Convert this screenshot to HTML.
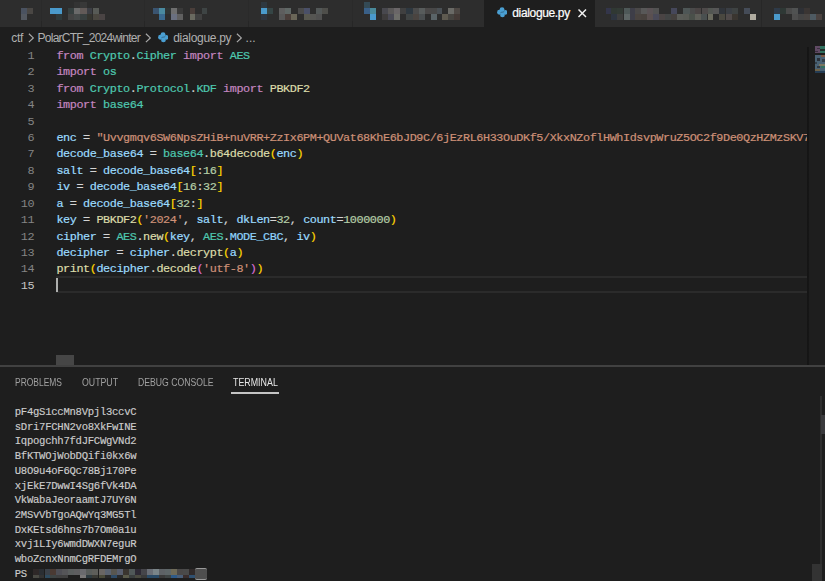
<!DOCTYPE html>
<html><head><meta charset="utf-8">
<style>
html,body{margin:0;padding:0;width:825px;height:581px;overflow:hidden;background:#1e1e1e;}
body{position:relative;font-family:"Liberation Sans",sans-serif;}
.abs{position:absolute;}
i{position:absolute;display:block;}
#tabs{position:absolute;left:0;top:0;width:825px;height:27.4px;background:#2d2d2d;}
.sep{position:absolute;top:0;width:1px;height:27px;background:#272727;}
#active{position:absolute;left:484px;top:0;width:110.5px;height:27.4px;background:#1e1e1e;}
.tabtxt{position:absolute;font-size:12px;color:#ffffff;white-space:nowrap;-webkit-text-stroke:0.2px #ffffff;}
#crumb{position:absolute;left:0;top:27px;width:825px;height:19px;font-size:12px;color:#b0b0b0;white-space:nowrap;}
#crumb span{position:absolute;top:3.5px;}
.ln{position:absolute;left:0;width:34.2px;text-align:right;color:#858585;font-family:"Liberation Mono",monospace;font-size:11.8px;letter-spacing:-0.413px;line-height:16.43px;height:16.43px;}
.cl{position:absolute;left:56.4px;font-family:"Liberation Mono",monospace;font-size:11.8px;letter-spacing:-0.413px;line-height:16.43px;height:16.43px;white-space:pre;color:#d4d4d4;-webkit-text-stroke:0.2px currentColor;}
.k{color:#c586c0}.t{color:#4ec9b0}.v{color:#9cdcfe}.f{color:#dcdcaa}.s{color:#ce9178}.n{color:#b5cea8}.b1{color:#ffd700}.b2{color:#da70d6}.c{color:#8fd4fc}
#panelborder{position:absolute;left:0;top:365px;width:825px;height:1.5px;background:#414141;}
.ptab{position:absolute;top:377px;font-size:10.2px;color:#a0a0a0;white-space:nowrap;transform-origin:0 0;}
.tl{position:absolute;left:14.8px;font-family:"Liberation Mono",monospace;font-size:10.6px;letter-spacing:-0.28px;line-height:14.7px;height:14.7px;white-space:pre;color:#cccccc;-webkit-text-stroke:0.15px currentColor;}
</style></head><body>
<div id="tabs">
  <div class="sep" style="left:41px;top:20.5px;height:6.9px;background:#262626"></div><div class="sep" style="left:41px;height:20.5px;background:#2a2a2a"></div>
  <div class="sep" style="left:143.5px;top:20.5px;height:6.9px;background:#262626"></div><div class="sep" style="left:143.5px;height:20.5px;background:#2a2a2a"></div>
  <div class="sep" style="left:247.7px;top:20.5px;height:6.9px;background:#262626"></div><div class="sep" style="left:247.7px;height:20.5px;background:#2a2a2a"></div>
  <div class="sep" style="left:351.7px;top:20.5px;height:6.9px;background:#262626"></div><div class="sep" style="left:351.7px;height:20.5px;background:#2a2a2a"></div>
  <div class="sep" style="left:761.3px"></div>
<div style="position:absolute;left:0;top:0;width:825px;height:27px;filter:blur(0.45px)">
<i style="left:20.9px;top:7.8px;width:6.1px;height:6.0px;background:#4A5260"></i>
<i style="left:27.0px;top:7.8px;width:6.0px;height:6.0px;background:#4A4744"></i>
<i style="left:20.9px;top:13.8px;width:6.1px;height:6.1px;background:#535860"></i>
<i style="left:50.0px;top:7.8px;width:6.0px;height:6.0px;background:#4A9ACC"></i>
<i style="left:56.0px;top:7.8px;width:6.0px;height:6.0px;background:#4A9ACC"></i>
<i style="left:56.0px;top:13.8px;width:6.0px;height:6.1px;background:#2E3A3C"></i>
<i style="left:68.2px;top:7.8px;width:6.2px;height:6.0px;background:#364040"></i>
<i style="left:74.4px;top:7.8px;width:6.0px;height:6.0px;background:#6A6A6A"></i>
<i style="left:80.4px;top:7.8px;width:6.3px;height:6.0px;background:#625A58"></i>
<i style="left:86.7px;top:7.8px;width:5.8px;height:6.0px;background:#3C3E44"></i>
<i style="left:92.5px;top:7.8px;width:6.3px;height:6.0px;background:#575A56"></i>
<i style="left:68.2px;top:13.8px;width:6.2px;height:6.1px;background:#444444"></i>
<i style="left:74.4px;top:13.8px;width:6.0px;height:6.1px;background:#464A4A"></i>
<i style="left:80.4px;top:13.8px;width:6.3px;height:6.1px;background:#394040"></i>
<i style="left:86.7px;top:13.8px;width:5.8px;height:6.1px;background:#35352F"></i>
<i style="left:92.5px;top:13.8px;width:6.3px;height:6.1px;background:#4A4740"></i>
<i style="left:98.8px;top:13.8px;width:5.8px;height:6.1px;background:#4A4444"></i>
<i style="left:74.4px;top:1.7px;width:6.0px;height:6.1px;background:#333333"></i>
<i style="left:80.4px;top:1.7px;width:6.3px;height:6.1px;background:#383838"></i>
<i style="left:153.1px;top:7.8px;width:6.0px;height:6.0px;background:#3A5470"></i>
<i style="left:159.1px;top:7.8px;width:6.1px;height:6.0px;background:#4A8AA0"></i>
<i style="left:165.2px;top:7.8px;width:5.8px;height:6.0px;background:#2F3535"></i>
<i style="left:171.0px;top:7.8px;width:6.3px;height:6.0px;background:#6E6E6E"></i>
<i style="left:177.3px;top:7.8px;width:5.9px;height:6.0px;background:#3A3A3A"></i>
<i style="left:189.5px;top:7.8px;width:5.8px;height:6.0px;background:#4A3E3A"></i>
<i style="left:201.6px;top:7.8px;width:5.8px;height:6.0px;background:#3E4444"></i>
<i style="left:159.1px;top:13.8px;width:6.1px;height:6.1px;background:#3A6A90"></i>
<i style="left:171.0px;top:13.8px;width:6.3px;height:6.1px;background:#6A7080"></i>
<i style="left:177.3px;top:13.8px;width:5.9px;height:6.1px;background:#606060"></i>
<i style="left:189.5px;top:13.8px;width:5.8px;height:6.1px;background:#6A6A60"></i>
<i style="left:195.3px;top:13.8px;width:6.3px;height:6.1px;background:#404040"></i>
<i style="left:261.0px;top:1.7px;width:6.2px;height:6.1px;background:#2E3840"></i>
<i style="left:261.0px;top:7.8px;width:6.2px;height:6.0px;background:#4A9ACC"></i>
<i style="left:267.2px;top:7.8px;width:5.8px;height:6.0px;background:#354545"></i>
<i style="left:261.0px;top:13.8px;width:6.2px;height:6.1px;background:#2E3540"></i>
<i style="left:279.0px;top:7.8px;width:6.3px;height:6.0px;background:#5E5E5E"></i>
<i style="left:285.3px;top:7.8px;width:6.1px;height:6.0px;background:#606866"></i>
<i style="left:297.5px;top:7.8px;width:6.1px;height:6.0px;background:#4A4A4A"></i>
<i style="left:303.6px;top:7.8px;width:6.0px;height:6.0px;background:#4A5068"></i>
<i style="left:315.9px;top:7.8px;width:6.0px;height:6.0px;background:#535858"></i>
<i style="left:321.9px;top:7.8px;width:6.1px;height:6.0px;background:#4E4E4A"></i>
<i style="left:279.0px;top:13.8px;width:6.3px;height:6.1px;background:#585858"></i>
<i style="left:285.3px;top:13.8px;width:6.1px;height:6.1px;background:#4A3E3A"></i>
<i style="left:291.4px;top:13.8px;width:6.1px;height:6.1px;background:#6A6658"></i>
<i style="left:303.6px;top:13.8px;width:6.0px;height:6.1px;background:#585850"></i>
<i style="left:309.6px;top:13.8px;width:6.3px;height:6.1px;background:#555552"></i>
<i style="left:315.9px;top:13.8px;width:6.0px;height:6.1px;background:#505050"></i>
<i style="left:364.1px;top:1.7px;width:6.1px;height:6.1px;background:#344A55"></i>
<i style="left:364.1px;top:7.8px;width:6.1px;height:6.0px;background:#3A6088"></i>
<i style="left:370.2px;top:7.8px;width:6.0px;height:6.0px;background:#4A8A9A"></i>
<i style="left:370.2px;top:13.8px;width:6.0px;height:6.1px;background:#4A9ACC"></i>
<i style="left:382.0px;top:7.8px;width:6.1px;height:6.0px;background:#48484E"></i>
<i style="left:388.1px;top:7.8px;width:6.0px;height:6.0px;background:#5A5858"></i>
<i style="left:394.1px;top:7.8px;width:6.1px;height:6.0px;background:#6A6668"></i>
<i style="left:400.2px;top:7.8px;width:6.1px;height:6.0px;background:#404040"></i>
<i style="left:406.3px;top:7.8px;width:6.3px;height:6.0px;background:#2E3840"></i>
<i style="left:412.6px;top:7.8px;width:6.1px;height:6.0px;background:#4A4A4A"></i>
<i style="left:418.7px;top:7.8px;width:6.1px;height:6.0px;background:#585C5C"></i>
<i style="left:424.8px;top:7.8px;width:6.1px;height:6.0px;background:#4A4848"></i>
<i style="left:430.9px;top:7.8px;width:6.1px;height:6.0px;background:#484848"></i>
<i style="left:437.0px;top:7.8px;width:5.1px;height:6.0px;background:#4A5055"></i>
<i style="left:448.1px;top:7.8px;width:6.0px;height:6.0px;background:#6A6A66"></i>
<i style="left:454.1px;top:7.8px;width:6.2px;height:6.0px;background:#4E4844"></i>
<i style="left:382.0px;top:13.8px;width:6.1px;height:6.1px;background:#3E3C3C"></i>
<i style="left:388.1px;top:13.8px;width:6.0px;height:6.1px;background:#4A4A55"></i>
<i style="left:394.1px;top:13.8px;width:6.1px;height:6.1px;background:#6E6E6A"></i>
<i style="left:406.3px;top:13.8px;width:6.3px;height:6.1px;background:#404444"></i>
<i style="left:412.6px;top:13.8px;width:6.1px;height:6.1px;background:#4A4440"></i>
<i style="left:418.7px;top:13.8px;width:6.1px;height:6.1px;background:#4A4E50"></i>
<i style="left:430.9px;top:13.8px;width:6.1px;height:6.1px;background:#5A6468"></i>
<i style="left:442.1px;top:13.8px;width:6.0px;height:6.1px;background:#5E5A50"></i>
<i style="left:448.1px;top:13.8px;width:6.0px;height:6.1px;background:#464440"></i>
<i style="left:454.1px;top:13.8px;width:6.2px;height:6.1px;background:#443A36"></i>
<i style="left:605.5px;top:7.8px;width:5.8px;height:6.0px;background:#33354A"></i>
<i style="left:611.3px;top:7.8px;width:5.9px;height:6.0px;background:#303833"></i>
<i style="left:617.2px;top:7.8px;width:6.3px;height:6.0px;background:#323A35"></i>
<i style="left:623.5px;top:7.8px;width:6.3px;height:6.0px;background:#4E5858"></i>
<i style="left:629.8px;top:7.8px;width:4.8px;height:6.0px;background:#3E3E48"></i>
<i style="left:634.6px;top:7.8px;width:6.4px;height:6.0px;background:#4A4848"></i>
<i style="left:641.0px;top:7.8px;width:6.2px;height:6.0px;background:#585858"></i>
<i style="left:647.2px;top:7.8px;width:5.8px;height:6.0px;background:#5A5255"></i>
<i style="left:653.0px;top:7.8px;width:6.0px;height:6.0px;background:#525252"></i>
<i style="left:611.3px;top:13.8px;width:5.9px;height:6.1px;background:#2E3540"></i>
<i style="left:617.2px;top:13.8px;width:6.3px;height:6.1px;background:#3E3E3E"></i>
<i style="left:623.5px;top:13.8px;width:6.3px;height:6.1px;background:#5E6666"></i>
<i style="left:629.8px;top:13.8px;width:4.8px;height:6.1px;background:#3E3E48"></i>
<i style="left:634.6px;top:13.8px;width:6.4px;height:6.1px;background:#4A4440"></i>
<i style="left:641.0px;top:13.8px;width:6.2px;height:6.1px;background:#48423E"></i>
<i style="left:647.2px;top:13.8px;width:5.8px;height:6.1px;background:#5A5050"></i>
<i style="left:653.0px;top:13.8px;width:6.0px;height:6.1px;background:#4A4A58"></i>
<i style="left:659.0px;top:13.8px;width:6.0px;height:6.1px;background:#4A4444"></i>
<i style="left:665.0px;top:13.8px;width:5.9px;height:6.1px;background:#424444"></i>
<i style="left:671.2px;top:7.8px;width:6.1px;height:6.0px;background:#45475A"></i>
<i style="left:683.3px;top:7.8px;width:6.3px;height:6.0px;background:#4E5656"></i>
<i style="left:689.6px;top:7.8px;width:5.8px;height:6.0px;background:#4A4A4A"></i>
<i style="left:695.4px;top:7.8px;width:6.1px;height:6.0px;background:#4A4444"></i>
<i style="left:701.5px;top:7.8px;width:6.0px;height:6.0px;background:#4E4A4A"></i>
<i style="left:707.5px;top:7.8px;width:5.8px;height:6.0px;background:#525652"></i>
<i style="left:713.3px;top:7.8px;width:6.1px;height:6.0px;background:#565656"></i>
<i style="left:719.4px;top:7.8px;width:6.1px;height:6.0px;background:#30343A"></i>
<i style="left:725.5px;top:7.8px;width:6.3px;height:6.0px;background:#3A3E44"></i>
<i style="left:731.8px;top:7.8px;width:5.8px;height:6.0px;background:#3E4242"></i>
<i style="left:670.9px;top:13.8px;width:6.1px;height:6.1px;background:#44403E"></i>
<i style="left:677.0px;top:13.8px;width:6.3px;height:6.1px;background:#5A5C58"></i>
<i style="left:683.3px;top:13.8px;width:5.8px;height:6.1px;background:#585A55"></i>
<i style="left:689.1px;top:13.8px;width:6.0px;height:6.1px;background:#4A504A"></i>
<i style="left:695.1px;top:13.8px;width:6.1px;height:6.1px;background:#5E5E58"></i>
<i style="left:701.2px;top:13.8px;width:6.3px;height:6.1px;background:#4A5050"></i>
<i style="left:707.5px;top:13.8px;width:5.8px;height:6.1px;background:#6A6A5E"></i>
<i style="left:713.3px;top:13.8px;width:6.1px;height:6.1px;background:#2A2A2A"></i>
<i style="left:719.4px;top:13.8px;width:6.1px;height:6.1px;background:#4A4840"></i>
<i style="left:725.5px;top:13.8px;width:6.3px;height:6.1px;background:#504A4A"></i>
<i style="left:731.8px;top:13.8px;width:5.8px;height:6.1px;background:#3A3530"></i>
<i style="left:743.7px;top:7.8px;width:6.0px;height:6.0px;background:#454C58"></i>
<i style="left:749.7px;top:13.8px;width:6.0px;height:6.1px;background:#B0ACA0"></i>
<i style="left:773.7px;top:7.8px;width:6.0px;height:6.0px;background:#2E3A48"></i>
<i style="left:779.7px;top:7.8px;width:6.0px;height:6.0px;background:#2E3835"></i>
<i style="left:785.7px;top:7.8px;width:6.0px;height:6.0px;background:#4A4A4A"></i>
<i style="left:791.7px;top:7.8px;width:6.6px;height:6.0px;background:#505252"></i>
<i style="left:798.3px;top:7.8px;width:6.0px;height:6.0px;background:#2E3035"></i>
<i style="left:804.3px;top:7.8px;width:6.0px;height:6.0px;background:#3A3533"></i>
<i style="left:773.7px;top:13.8px;width:6.0px;height:6.1px;background:#4A9ACC"></i>
<i style="left:791.7px;top:13.8px;width:6.6px;height:6.1px;background:#4E4E4E"></i>
<i style="left:798.3px;top:13.8px;width:6.0px;height:6.1px;background:#444444"></i>
<i style="left:804.3px;top:13.8px;width:6.0px;height:6.1px;background:#484442"></i>
<i style="left:810.3px;top:13.8px;width:6.0px;height:6.1px;background:#4E5A62"></i>
<i style="left:816.3px;top:13.8px;width:6.0px;height:6.1px;background:#4A4240"></i>
</div>
</div>
<div id="active">
  <svg class="abs" style="left:12.5px;top:7px;filter:blur(0.25px)" width="10.5" height="10.5" viewBox="0 0 10 10">
    <g fill="#4a9fd2"><ellipse cx="4.8" cy="2.4" rx="2.3" ry="2.1"/><ellipse cx="2.2" cy="5" rx="2.1" ry="2.3"/><ellipse cx="7.8" cy="5.1" rx="2.1" ry="2.3"/><ellipse cx="5.2" cy="7.6" rx="2.3" ry="2.1"/><circle cx="5" cy="5" r="2"/></g><path d="M3.3 5.5C4.5 4.6 5.6 5.2 6.9 4.3" stroke="#264660" stroke-width="0.6" fill="none"/>
  </svg>
  <div class="tabtxt" style="left:28.3px;top:5.5px;letter-spacing:-0.35px">dialogue.py</div>
  <svg class="abs" style="left:94px;top:9.3px" width="8.5" height="8.5" viewBox="0 0 8.5 8.5"><path d="M0.5 0.5L8 8M8 0.5L0.5 8" stroke="#f0f0f0" stroke-width="1.45"/></svg>
</div>
<div id="crumb">
  <span style="left:11.3px;letter-spacing:-0.3px">ctf</span>
  <svg class="abs" style="left:28px;top:5.5px" width="7" height="10" viewBox="0 0 7 10"><path d="M0.9 0.7L5.3 4.9L0.9 9.1" fill="none" stroke="#a9a9a9" stroke-width="1.2"/></svg>
  <span style="left:37.6px;letter-spacing:-0.76px">PolarCTF_2024winter</span>
  <svg class="abs" style="left:145.2px;top:5.5px" width="7" height="10" viewBox="0 0 7 10"><path d="M0.9 0.7L5.3 4.9L0.9 9.1" fill="none" stroke="#a9a9a9" stroke-width="1.2"/></svg>
  <svg class="abs" style="left:157.7px;top:5px;filter:blur(0.25px)" width="10.5" height="10.5" viewBox="0 0 10 10">
    <g fill="#4a9fd2"><ellipse cx="4.8" cy="2.4" rx="2.3" ry="2.1"/><ellipse cx="2.2" cy="5" rx="2.1" ry="2.3"/><ellipse cx="7.8" cy="5.1" rx="2.1" ry="2.3"/><ellipse cx="5.2" cy="7.6" rx="2.3" ry="2.1"/><circle cx="5" cy="5" r="2"/></g><path d="M3.3 5.5C4.5 4.6 5.6 5.2 6.9 4.3" stroke="#264660" stroke-width="0.6" fill="none"/>
  </svg>
  <span style="left:173.2px;letter-spacing:-0.3px">dialogue.py</span>
  <svg class="abs" style="left:235.7px;top:5.5px" width="7" height="10" viewBox="0 0 7 10"><path d="M0.9 0.7L5.3 4.9L0.9 9.1" fill="none" stroke="#a9a9a9" stroke-width="1.2"/></svg>
  <span style="left:245.6px">...</span>
</div>

<div id="editor">
<div class="ln" style="top:47.8px">1</div>
<div class="ln" style="top:64.2px">2</div>
<div class="ln" style="top:80.7px">3</div>
<div class="ln" style="top:97.1px">4</div>
<div class="ln" style="top:113.5px">5</div>
<div class="ln" style="top:129.9px">6</div>
<div class="ln" style="top:146.4px">7</div>
<div class="ln" style="top:162.8px">8</div>
<div class="ln" style="top:179.2px">9</div>
<div class="ln" style="top:195.7px">10</div>
<div class="ln" style="top:212.1px">11</div>
<div class="ln" style="top:228.5px">12</div>
<div class="ln" style="top:244.9px">13</div>
<div class="ln" style="top:261.4px">14</div>
<div class="ln" style="top:277.8px;color:#c6c6c6">15</div>
<!-- current line highlight -->
<i style="left:56px;top:276.4px;width:751px;height:16.6px;box-sizing:border-box;border-top:2px solid #2b2b2b;border-bottom:2px solid #2b2b2b"></i>
<i style="left:56.3px;top:277.8px;width:1.7px;height:14px;background:#aeafad"></i>

<div class="cl" style="top:47.8px"><span class="k">from</span> <span class="t">Crypto</span>.<span class="t">Cipher</span> <span class="k">import</span> <span class="t">AES</span></div>
<div class="cl" style="top:64.2px"><span class="k">import</span> <span class="t">os</span></div>
<div class="cl" style="top:80.7px"><span class="k">from</span> <span class="t">Crypto</span>.<span class="t">Protocol</span>.<span class="t">KDF</span> <span class="k">import</span> <span class="f">PBKDF2</span></div>
<div class="cl" style="top:97.1px"><span class="k">import</span> <span class="t">base64</span></div>
<div class="cl" style="top:129.9px"><span class="v">enc</span> = <span class="s">"Uvvgmqv6SW6NpsZHiB+nuVRR+ZzIx6PM+QUVat68KhE6bJD9C/6jEzRL6H33OuDKf5/XkxNZoflHWhIdsvpWruZ5OC2f9De0QzHZMzSKV7</span></div>
<div class="cl" style="top:146.4px"><span class="v">decode_base64</span> = <span class="t">base64</span>.<span class="f">b64decode</span><span class="b1">(</span><span class="v">enc</span><span class="b1">)</span></div>
<div class="cl" style="top:162.8px"><span class="v">salt</span> = <span class="v">decode_base64</span><span class="b1">[</span>:<span class="n">16</span><span class="b1">]</span></div>
<div class="cl" style="top:179.2px"><span class="v">iv</span> = <span class="v">decode_base64</span><span class="b1">[</span><span class="n">16</span>:<span class="n">32</span><span class="b1">]</span></div>
<div class="cl" style="top:195.7px"><span class="v">a</span> = <span class="v">decode_base64</span><span class="b1">[</span><span class="n">32</span>:<span class="b1">]</span></div>
<div class="cl" style="top:212.1px"><span class="v">key</span> = <span class="f">PBKDF2</span><span class="b1">(</span><span class="s">'2024'</span>, <span class="v">salt</span>, <span class="v">dkLen</span>=<span class="n">32</span>, <span class="v">count</span>=<span class="n">1000000</span><span class="b1">)</span></div>
<div class="cl" style="top:228.5px"><span class="v">cipher</span> = <span class="t">AES</span>.<span class="f">new</span><span class="b1">(</span><span class="v">key</span>, <span class="t">AES</span>.<span class="c">MODE_CBC</span>, <span class="v">iv</span><span class="b1">)</span></div>
<div class="cl" style="top:244.9px"><span class="v">decipher</span> = <span class="v">cipher</span>.<span class="f">decrypt</span><span class="b1">(</span><span class="v">a</span><span class="b1">)</span></div>
<div class="cl" style="top:261.4px"><span class="f">print</span><span class="b1">(</span><span class="v">decipher</span>.<span class="f">decode</span><span class="b2">(</span><span class="s">'utf-8'</span><span class="b2">)</span><span class="b1">)</span></div>
<!-- minimap shadow and cover -->
<i style="left:807px;top:46px;width:18px;height:320px;background:#1e1e1e"></i>
<i style="left:806.5px;top:47px;width:2.5px;height:319px;background:linear-gradient(to right,#181818,#111111 60%,#1e1e1e)"></i>
<div style="position:absolute;left:0;top:0;filter:blur(0.6px)">
<i style="left:815px;top:46.2px;width:5.0px;height:7.3px;background:#604A64"></i>
<i style="left:820px;top:46.2px;width:5.0px;height:7.3px;background:#30705E"></i>
<i style="left:817px;top:47.5px;width:3.0px;height:1.5px;background:#3a3040"></i>
<i style="left:820px;top:48.5px;width:5.0px;height:2.0px;background:#22302c"></i>
<i style="left:815px;top:51px;width:3.0px;height:1.0px;background:#3a3040"></i>
<i style="left:815px;top:55px;width:10.0px;height:16.0px;background:#4A6274"></i>
<i style="left:821px;top:55px;width:4.0px;height:2.0px;background:#7A5A46"></i>
<i style="left:817px;top:58px;width:3.0px;height:3.0px;background:#2a3038"></i>
<i style="left:822px;top:59px;width:3.0px;height:3.0px;background:#34404a"></i>
<i style="left:815px;top:62px;width:2.0px;height:2.0px;background:#34404a"></i>
<i style="left:819px;top:64px;width:6.0px;height:2.0px;background:#7A7660"></i>
<i style="left:821px;top:66px;width:4.0px;height:2.0px;background:#337060"></i>
<i style="left:817px;top:66px;width:3.0px;height:2.0px;background:#303840"></i>
<i style="left:815px;top:69px;width:5.0px;height:2.0px;background:#6E6248"></i>
<i style="left:815px;top:71px;width:10.0px;height:1.7px;background:#243C54"></i>
</div>
<!-- horizontal scrollbar slider -->
<i style="left:56px;top:354.7px;width:17.6px;height:10.5px;background:#464646"></i>
</div>

<div id="panelborder"></div>
<div class="ptab" style="left:14.7px;transform:scaleX(0.83)">PROBLEMS</div>
<div class="ptab" style="left:82px;transform:scaleX(0.86)">OUTPUT</div>
<div class="ptab" style="left:138px;transform:scaleX(0.85)">DEBUG CONSOLE</div>
<div class="ptab" style="left:232.8px;color:#e7e7e7;transform:scaleX(0.87)">TERMINAL</div>
<i style="left:231px;top:392px;width:48px;height:2px;background:#c4c4c4"></i>

<div id="term">
<div class="tl" style="top:405.0px">pF4gS1ccMn8Vpjl3ccvC</div>
<div class="tl" style="top:419.7px">sDri7FCHN2vo8XkFwINE</div>
<div class="tl" style="top:434.4px">Iqpogchh7fdJFCWgVNd2</div>
<div class="tl" style="top:449.1px">BfKTWOjWobDQifi0kx6w</div>
<div class="tl" style="top:463.8px">U8O9u4oF6Qc78Bj170Pe</div>
<div class="tl" style="top:478.5px">xjEkE7DwwI4Sg6fVk4DA</div>
<div class="tl" style="top:493.2px">VkWabaJeoraamtJ7UY6N</div>
<div class="tl" style="top:507.9px">2MSvVbTgoAQwYq3MG5Tl</div>
<div class="tl" style="top:522.6px">DxKEtsd6hns7b7Om0a1u</div>
<div class="tl" style="top:537.3px">xvj1LIy6wmdDWXN7eguR</div>
<div class="tl" style="top:552.0px">wboZcnxNnmCgRFDEMrgO</div>
<div class="tl" style="top:566.7px">PS</div>
<div style="position:absolute;left:0;top:0;width:825px;height:581px;filter:blur(0.35px)">
<i style="left:33.0px;top:568.5px;width:6.1px;height:6.5px;background:#2E2828"></i>
<i style="left:39.1px;top:568.5px;width:5.4px;height:6.5px;background:#2A2E33"></i>
<i style="left:44.5px;top:568.5px;width:5.5px;height:6.5px;background:#3A4048"></i>
<i style="left:50.0px;top:568.5px;width:6.0px;height:6.5px;background:#4A3A33"></i>
<i style="left:56.0px;top:568.5px;width:6.1px;height:6.5px;background:#4E4E55"></i>
<i style="left:62.1px;top:568.5px;width:6.1px;height:6.5px;background:#555558"></i>
<i style="left:68.2px;top:568.5px;width:6.0px;height:6.5px;background:#5A5E5E"></i>
<i style="left:74.2px;top:568.5px;width:6.1px;height:6.5px;background:#5E5E60"></i>
<i style="left:80.3px;top:568.5px;width:6.1px;height:6.5px;background:#6A6A6E"></i>
<i style="left:86.4px;top:568.5px;width:6.0px;height:6.5px;background:#585C5A"></i>
<i style="left:92.4px;top:568.5px;width:6.1px;height:6.5px;background:#5E5E5A"></i>
<i style="left:98.5px;top:568.5px;width:6.0px;height:6.5px;background:#6A6664"></i>
<i style="left:104.5px;top:568.5px;width:0.8px;height:6.5px;background:#505058"></i>
<i style="left:105.3px;top:568.5px;width:6.0px;height:6.5px;background:#5A6270"></i>
<i style="left:111.3px;top:568.5px;width:6.0px;height:6.5px;background:#585650"></i>
<i style="left:117.3px;top:568.5px;width:6.0px;height:6.5px;background:#585E6E"></i>
<i style="left:123.3px;top:568.5px;width:6.0px;height:6.5px;background:#3A3530"></i>
<i style="left:129.3px;top:568.5px;width:6.0px;height:6.5px;background:#505858"></i>
<i style="left:135.3px;top:568.5px;width:6.0px;height:6.5px;background:#2E2A35"></i>
<i style="left:141.3px;top:568.5px;width:6.0px;height:6.5px;background:#45454A"></i>
<i style="left:147.3px;top:568.5px;width:6.0px;height:6.5px;background:#6A6E76"></i>
<i style="left:153.3px;top:568.5px;width:6.0px;height:6.5px;background:#7A8488"></i>
<i style="left:159.3px;top:568.5px;width:6.0px;height:6.5px;background:#5E6266"></i>
<i style="left:165.3px;top:568.5px;width:6.0px;height:6.5px;background:#5E6668"></i>
<i style="left:171.3px;top:568.5px;width:6.0px;height:6.5px;background:#6E6A58"></i>
<i style="left:177.3px;top:568.5px;width:6.0px;height:6.5px;background:#4A4848"></i>
<i style="left:183.3px;top:568.5px;width:6.0px;height:6.5px;background:#4A4A4A"></i>
<i style="left:189.3px;top:568.5px;width:6.0px;height:6.5px;background:#302A2A"></i>
<i style="left:33.0px;top:575.0px;width:6.1px;height:3.3px;background:#4A4A44"></i>
<i style="left:39.1px;top:575.0px;width:5.4px;height:3.3px;background:#333333"></i>
<i style="left:44.5px;top:575.0px;width:5.5px;height:3.3px;background:#2E4A5E"></i>
<i style="left:50.0px;top:575.0px;width:6.0px;height:3.3px;background:#3E4444"></i>
<i style="left:56.0px;top:575.0px;width:12.2px;height:3.3px;background:#404040"></i>
<i style="left:80.3px;top:575.0px;width:6.1px;height:3.3px;background:#7A7878"></i>
<i style="left:86.4px;top:575.0px;width:6.0px;height:3.3px;background:#2E3A40"></i>
<i style="left:92.4px;top:575.0px;width:6.1px;height:3.3px;background:#3A3A35"></i>
<i style="left:98.5px;top:575.0px;width:6.8px;height:3.3px;background:#4A4A3A"></i>
<i style="left:105.3px;top:575.0px;width:6.0px;height:3.3px;background:#2A2A2A"></i>
<i style="left:111.3px;top:575.0px;width:6.0px;height:3.3px;background:#2E4A66"></i>
<i style="left:117.3px;top:575.0px;width:6.0px;height:3.3px;background:#2A2A2A"></i>
<i style="left:123.3px;top:575.0px;width:6.0px;height:3.3px;background:#5A5A4A"></i>
<i style="left:129.3px;top:575.0px;width:6.0px;height:3.3px;background:#3A3E3E"></i>
<i style="left:135.3px;top:575.0px;width:6.0px;height:3.3px;background:#4A4A40"></i>
<i style="left:141.3px;top:575.0px;width:6.0px;height:3.3px;background:#3A3A3A"></i>
<i style="left:147.3px;top:575.0px;width:12.0px;height:3.3px;background:#2A4A66"></i>
<i style="left:159.3px;top:575.0px;width:6.0px;height:3.3px;background:#3A3A3A"></i>
<i style="left:165.3px;top:575.0px;width:6.0px;height:3.3px;background:#3E4444"></i>
<i style="left:171.3px;top:575.0px;width:6.0px;height:3.3px;background:#2E5A88"></i>
<i style="left:177.3px;top:575.0px;width:6.0px;height:3.3px;background:#4A5E78"></i>
<i style="left:183.3px;top:575.0px;width:6.0px;height:3.3px;background:#3A2E2E"></i>
<i style="left:189.3px;top:575.0px;width:6.0px;height:3.3px;background:#305070"></i>
</div>
<i style="left:195.3px;top:567.7px;width:11.4px;height:12px;background:#4e4e4e;box-sizing:border-box;border-top:1.2px solid #9a9a9a;border-bottom:1.2px solid #9a9a9a;border-radius:2px"></i>
<!-- terminal scrollbar -->
<i style="left:820px;top:396px;width:2px;height:185px;background:#2e2e2e"></i>
<i style="left:821.2px;top:415px;width:3.8px;height:18.7px;background:#3a3a3d"></i>
<i style="left:812px;top:564.2px;width:9.8px;height:17px;background:#333333"></i>
</div>
</body></html>
